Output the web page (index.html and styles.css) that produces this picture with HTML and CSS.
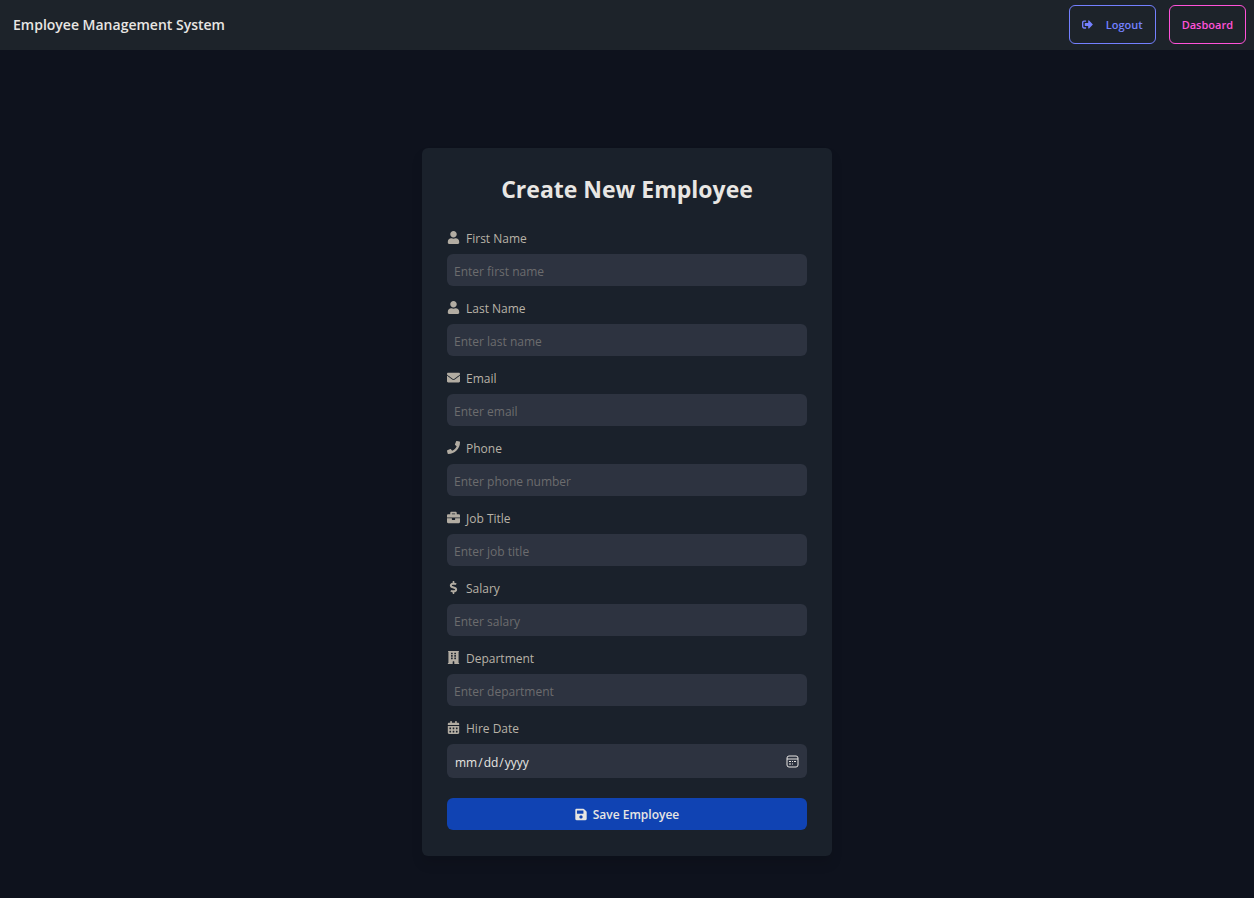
FILE: index.html
```html
<!DOCTYPE html>
<html lang="en">
<head>
<meta charset="utf-8">
<meta name="viewport" content="width=device-width, initial-scale=1">
<title>Employee Management System</title>
<link rel="stylesheet" href="styles.css">
</head>
<body>
<header class="navbar">
  <a class="brand" href="#">Employee Management System</a>
  <nav class="nav-actions">
    <button class="btn btn-primary" type="button">
      <svg class="btn-icon" viewBox="0 0 512 512" aria-hidden="true"><path d="M497 273L329 441c-15 15-41 4.500-41-17v-96H152c-13.300 0-24-10.700-24-24v-96c0-13.300 10.700-24 24-24h136V88c0-21.400 25.900-32 41-17l168 168c9.300 9.400 9.300 24.600 0 34zM192 436v-40c0-6.600-5.400-12-12-12H96c-17.700 0-32-14.300-32-32V160c0-17.700 14.300-32 32-32h84c6.600 0 12-5.400 12-12V76c0-6.600-5.400-12-12-12H96c-53 0-96 43-96 96v192c0 53 43 96 96 96h84c6.600 0 12-5.400 12-12z"/></svg>
      Logout
    </button>
    <a class="btn btn-secondary" href="#">Dasboard</a>
  </nav>
</header>
<main class="page">
  <form class="card">
    <h1 class="title">Create New Employee</h1>
    <div class="field">
      <label class="label" for="first"><svg class="icon" viewBox="-32 0 512 512" aria-hidden="true"><path d="M224 256c70.700 0 128-57.300 128-128S294.700 0 224 0 96 57.300 96 128s57.300 128 128 128zm89.600 32h-16.700c-22.200 10.200-46.900 16-72.900 16s-50.600-5.800-72.900-16h-16.700C60.200 288 0 348.200 0 422.400V464c0 26.500 21.500 48 48 48h352c26.500 0 48-21.500 48-48v-41.600c0-74.200-60.200-134.400-134.400-134.400z"/></svg>First Name</label>
      <input class="input" id="first" type="text" placeholder="Enter first name">
    </div>
    <div class="field">
      <label class="label" for="last"><svg class="icon" viewBox="-32 0 512 512" aria-hidden="true"><path d="M224 256c70.700 0 128-57.300 128-128S294.700 0 224 0 96 57.300 96 128s57.300 128 128 128zm89.600 32h-16.700c-22.200 10.200-46.900 16-72.900 16s-50.600-5.800-72.900-16h-16.700C60.200 288 0 348.200 0 422.400V464c0 26.500 21.500 48 48 48h352c26.500 0 48-21.500 48-48v-41.600c0-74.200-60.200-134.400-134.400-134.400z"/></svg>Last Name</label>
      <input class="input" id="last" type="text" placeholder="Enter last name">
    </div>
    <div class="field">
      <label class="label" for="email"><svg class="icon" viewBox="0 0 512 512" aria-hidden="true"><path d="M502.300 190.800c3.900-3.100 9.700-.2 9.700 4.700V400c0 26.500-21.500 48-48 48H48c-26.500 0-48-21.500-48-48V195.600c0-5 5.700-7.800 9.700-4.700 22.400 17.400 52.100 39.500 154.100 113.600 21.100 15.400 56.700 47.800 92.200 47.600 35.700.3 72-32.800 92.300-47.600 102-74.100 131.600-96.300 154-113.700zM256 320c23.200.4 56.600-29.200 73.400-41.400 132.700-96.300 142.800-104.700 173.400-128.700 5.800-4.500 9.200-11.500 9.200-18.900v-19c0-26.500-21.500-48-48-48H48c-26.500 0-48 21.500-48 48v19c0 7.400 3.400 14.300 9.200 18.900 30.600 23.900 40.700 32.400 173.400 128.700 16.800 12.200 50.200 41.800 73.400 41.400z"/></svg>Email</label>
      <input class="input" id="email" type="email" placeholder="Enter email">
    </div>
    <div class="field">
      <label class="label" for="phone"><svg class="icon" viewBox="0 0 512 512" aria-hidden="true"><path d="M493.400 24.600l-104-24c-11.300-2.600-22.900 3.300-27.500 13.900l-48 112c-4.200 9.800-1.400 21.300 6.900 28l60.600 49.600c-36 76.700-98.900 140.500-177.200 177.200l-49.600-60.600c-6.800-8.300-18.200-11.100-28-6.900l-112 48C3.900 366.500-2 378.100.6 389.400l24 104C27.100 504.200 36.700 512 48 512c256.100 0 464-207.500 464-464 0-11.200-7.700-20.900-18.600-23.400z"/></svg>Phone</label>
      <input class="input" id="phone" type="tel" placeholder="Enter phone number">
    </div>
    <div class="field">
      <label class="label" for="job"><svg class="icon" viewBox="0 0 512 512" aria-hidden="true"><path d="M320 336c0 8.840-7.160 16-16 16h-96c-8.840 0-16-7.160-16-16v-48H0v144c0 25.600 22.400 48 48 48h416c25.600 0 48-22.400 48-48V288H320v48zm144-208h-80V80c0-25.600-22.400-48-48-48H176c-25.600 0-48 22.400-48 48v48H48c-25.600 0-48 22.400-48 48v80h512v-80c0-25.600-22.400-48-48-48zm-144 0H192V96h128v32z"/></svg>Job Title</label>
      <input class="input" id="job" type="text" placeholder="Enter job title">
    </div>
    <div class="field">
      <label class="label" for="salary"><svg class="icon" viewBox="-112 0 512 512" aria-hidden="true"><path d="M209.200 233.400l-108-31.600C88.700 198.200 80 186.500 80 173.500c0-16.300 13.200-29.500 29.500-29.500h66.300c12.200 0 24.200 3.700 34.200 10.500 6.100 4.100 14.300 3.100 19.500-2l34.800-34c7.100-6.900 6.100-18.400-1.800-24.500C238 74.800 207.400 64.100 176 64V16c0-8.800-7.200-16-16-16h-32c-8.800 0-16 7.200-16 16v48h-2.500C45.800 64-5.400 118.700.5 183.600c4.200 46.100 39.400 83.600 83.800 96.600l102.500 30c12.500 3.700 21.200 15.300 21.200 28.300 0 16.300-13.200 29.500-29.500 29.500h-66.300C100 368 88 364.300 78 357.500c-6.100-4.100-14.300-3.100-19.500 2l-34.800 34c-7.100 6.900-6.100 18.400 1.800 24.500 24.500 19.200 55.100 29.900 86.500 30v48c0 8.800 7.200 16 16 16h32c8.800 0 16-7.200 16-16v-48.200c46.600-.9 90.300-28.600 105.700-72.700 21.500-61.600-14.600-124.800-72.500-141.700z"/></svg>Salary</label>
      <input class="input" id="salary" type="text" inputmode="decimal" placeholder="Enter salary">
    </div>
    <div class="field">
      <label class="label" for="dept"><svg class="icon" viewBox="-32 0 512 512" aria-hidden="true"><path fill-rule="evenodd" d="M8 0h432v24l-16 12v440h12q12 0 12 12v24H256v-92q0-12-12-12h-40q-12 0-12 12v92H0v-24q0-12 12-12h12V36L8 24zM128 76v40q0 12 12 12h40q12 0 12-12V76q0-12-12-12h-40q-12 0-12 12zM256 76v40q0 12 12 12h40q12 0 12-12V76q0-12-12-12h-40q-12 0-12 12zM128 172v40q0 12 12 12h40q12 0 12-12v-40q0-12-12-12h-40q-12 0-12 12zM256 172v40q0 12 12 12h40q12 0 12-12v-40q0-12-12-12h-40q-12 0-12 12zM128 268v40q0 12 12 12h40q12 0 12-12v-40q0-12-12-12h-40q-12 0-12 12zM256 268v40q0 12 12 12h40q12 0 12-12v-40q0-12-12-12h-40q-12 0-12 12z"/></svg>Department</label>
      <input class="input" id="dept" type="text" placeholder="Enter department">
    </div>
    <div class="field">
      <label class="label" for="hire"><svg class="icon" viewBox="-32 0 512 512" aria-hidden="true"><path fill-rule="evenodd" d="M0 192v272c0 26.500 21.500 48 48 48h352c26.500 0 48-21.500 48-48V192zM64 268q0-12 12-12h40q12 0 12 12v40q0 12-12 12H76q-12 0-12-12zM192 268q0-12 12-12h40q12 0 12 12v40q0 12-12 12h-40q-12 0-12-12zM320 268q0-12 12-12h40q12 0 12 12v40q0 12-12 12h-40q-12 0-12-12zM64 396q0-12 12-12h40q12 0 12 12v40q0 12-12 12H76q-12 0-12-12zM192 396q0-12 12-12h40q12 0 12 12v40q0 12-12 12h-40q-12 0-12-12zM320 396q0-12 12-12h40q12 0 12 12v40q0 12-12 12h-40q-12 0-12-12zM400 64h-48V16q0-16-16-16h-32q-16 0-16 16v48H160V16q0-16-16-16h-32q-16 0-16 16v48H48C21.500 64 0 85.500 0 112v48h448v-48c0-26.500-21.500-48-48-48z"/></svg>Hire Date</label>
      <div class="date-wrap">
        <input class="input input-date" id="hire" type="date">
        <svg class="date-icon" viewBox="0 0 13 13" aria-hidden="true"><rect x="1" y="1" width="11" height="11" rx="2"/><path d="M1 4h11M3 6.500h2M6 6.500h1M8 6.500h2M3 9h2M6 9h1"/></svg>
      </div>
    </div>
    <button class="save" type="submit">
      <svg class="save-icon" viewBox="0 0 448 512" aria-hidden="true"><path d="M433.941 129.941l-83.882-83.882A48 48 0 0 0 316.118 32H48C21.490 32 0 53.490 0 80v352c0 26.510 21.490 48 48 48h352c26.510 0 48-21.490 48-48V163.882a48 48 0 0 0-14.059-33.941zM224 416c-35.346 0-64-28.654-64-64 0-35.346 28.654-64 64-64s64 28.654 64 64c0 35.346-28.654 64-64 64zm96-304.520V212c0 6.627-5.373 12-12 12H76c-6.627 0-12-5.373-12-12V108c0-6.627 5.373-12 12-12h228.520c3.183 0 6.235 1.264 8.485 3.515l3.480 3.480A11.996 11.996 0 0 1 320 111.480z"/></svg>
      Save Employee
    </button>
  </form>
</main>
</body>
</html>
```
FILE: styles.css
```css
* { box-sizing: border-box; }

body {
  margin: 0;
  min-height: 100vh;
  background: #0e121d;
  color: #e8e6e3;
  font-family: "Open Sans", "Noto Sans", sans-serif;
  font-size: 12px;
  line-height: 20px;
}

.navbar {
  display: flex;
  align-items: center;
  justify-content: space-between;
  min-height: 50px;
  padding: 5px 8px 6px 13px;
  background: #1d232a;
}

.brand {
  color: inherit;
  font-size: 14px;
  font-weight: 600;
  text-decoration: none;
}

.nav-actions {
  display: flex;
  gap: 13px;
}

.btn {
  display: flex;
  align-items: center;
  gap: 13px;
  height: 39px;
  padding: 0 12px;
  border: 1px solid currentColor;
  border-radius: 6px;
  background: transparent;
  font-family: inherit;
  font-size: 11px;
  font-weight: 600;
  text-decoration: none;
  cursor: pointer;
}

.btn-primary { color: #7480ff; }
.btn-secondary { color: #ff52d9; }

.btn-icon {
  width: 11px;
  height: 11px;
  fill: currentColor;
}

.page {
  display: flex;
  justify-content: center;
  padding: 98px 16px 40px;
}

.card {
  display: flex;
  flex-direction: column;
  gap: 13px;
  width: 100%;
  max-width: 410px;
  padding: 25px 25px 26px;
  border-radius: 6px;
  background: #1a212b;
  box-shadow: 0 8px 12px rgba(0, 0, 0, 0.1);
}

.title {
  margin: 0 0 11px;
  font-size: 23px;
  font-weight: 700;
  line-height: 32px;
  text-align: center;
}

.field {
  display: flex;
  flex-direction: column;
  gap: 5px;
}

.label {
  display: flex;
  align-items: flex-start;
  gap: 6px;
  color: #b8b2a7;
}

.icon {
  width: 13px;
  height: 13px;
  margin-top: 2px;
  fill: #b2aca2;
}

.input {
  width: 100%;
  height: 32px;
  padding: 2px 7px 0;
  border: 0;
  border-radius: 6px;
  background: #2d3340;
  color: #e8e6e3;
  font-family: inherit;
  font-size: 12px;
}

.input::placeholder {
  color: #6c6c6e;
  opacity: 1;
}

.date-wrap { position: relative; }

.input-date {
  display: block;
  height: 34px;
}

.input-date::-webkit-calendar-picker-indicator { opacity: 0; }

.date-icon {
  position: absolute;
  top: 11px;
  right: 8px;
  width: 13px;
  height: 13px;
  fill: none;
  stroke: #e8e6e3;
  pointer-events: none;
}

.save {
  display: flex;
  align-items: center;
  justify-content: center;
  gap: 6px;
  height: 32px;
  margin-top: 7px;
  padding: 1px 0 0;
  border: 0;
  border-radius: 6px;
  background: #1043b3;
  color: #e8e6e3;
  font-family: inherit;
  font-size: 12px;
  font-weight: 600;
  cursor: pointer;
}

.save-icon {
  width: 12px;
  height: 13px;
  fill: currentColor;
}
```
